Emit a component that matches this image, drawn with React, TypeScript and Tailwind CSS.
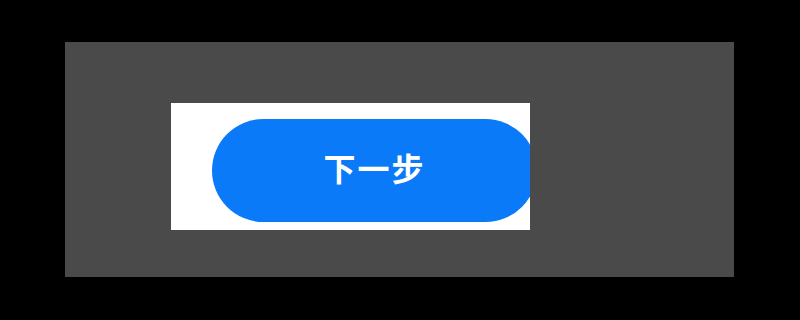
import React from "react";

const App = () => {
  return (
    <div className="w-[800px] h-[320px] bg-black pt-[42px] pl-[65px] overflow-hidden">
      <div className="w-[669px] h-[235px] bg-[#4a4a4a] pt-[61px] pl-[106px]">
        <div className="w-[359px] h-[127px] bg-white overflow-hidden flex pt-[16px] pl-[41px]">
          <button className="w-[325px] h-[103px] shrink-0 rounded-full bg-[#0a7af8] flex items-center justify-center pb-[8px] text-white text-[32px] leading-none font-bold tracking-[2px] font-['Noto_Sans_CJK_SC',sans-serif]">
            下一步
          </button>
        </div>
      </div>
    </div>
  );
};

export default App;
